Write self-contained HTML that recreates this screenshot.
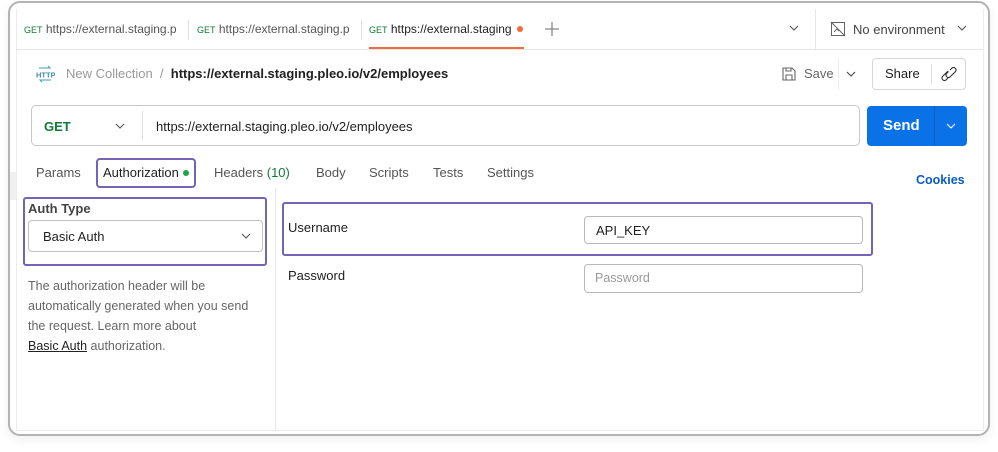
<!DOCTYPE html>
<html><head><meta charset="utf-8"><style>
*{box-sizing:border-box;margin:0;padding:0}
body{width:998px;height:452px;background:#fff;font-family:"Liberation Sans",sans-serif;position:relative;overflow:hidden;color:#212121}
.a{position:absolute;white-space:nowrap}
.t13{font-size:13px}
</style></head><body>
<div class="a" style="left:8px;top:1px;width:982px;height:435px;border:2px solid #b3b3b3;border-radius:12px;box-shadow:0 4px 10px rgba(0,0,0,0.06)"></div>
<div class="a" style="left:16px;top:9px;width:968px;height:422px;border:1px solid #ececec;border-top:none"></div>
<div class="a" style="left:10px;top:172px;width:6px;height:28px;background:#f0f0f0"></div>
<!-- tabs -->
<div class="a" style="left:16px;top:49px;width:967px;height:1px;background:#e6e6e6"></div>
<div class="a" style="left:24px;top:22px;font-size:12px;color:#555"><span style="color:#0f7b37;font-size:9px">GET</span> https://external.staging.p</div>
<div class="a" style="left:188px;top:20px;width:1px;height:20px;background:#e0e0e0"></div>
<div class="a" style="left:197px;top:22px;font-size:12px;color:#555"><span style="color:#0f7b37;font-size:9px">GET</span> https://external.staging.p</div>
<div class="a" style="left:361px;top:20px;width:1px;height:20px;background:#e0e0e0"></div>
<div class="a" style="left:369px;top:22px;font-size:12px;color:#212121"><span style="color:#0f7b37;font-size:9px">GET</span> https://external.staging</div>
<div class="a" style="left:517px;top:26px;width:6px;height:6px;border-radius:50%;background:#f26b3a"></div>
<div class="a" style="left:369px;top:47px;width:155px;height:2px;background:#f26b3a"></div>
<svg class="a" style="left:545px;top:22px" width="14" height="14"><path d="M7 0v14M0 7h14" stroke="#888" stroke-width="1.3"/></svg>
<svg class="a" style="left:789px;top:25px" width="10" height="7"><path d="M1 1l4 4 4-4" fill="none" stroke="#555" stroke-width="1.1"/></svg>
<div class="a" style="left:815px;top:9px;width:1px;height:40px;background:#e6e6e6"></div>
<svg class="a" style="left:830px;top:21px" width="16" height="16"><rect x="1.5" y="1.5" width="13" height="13" fill="none" stroke="#666"/><path d="M1 1l14 14M4 11l3-3 2 2" fill="none" stroke="#666"/></svg>
<div class="a t13" style="left:853px;top:22px;color:#444">No environment</div>
<svg class="a" style="left:957px;top:25px" width="10" height="7"><path d="M1 1l4 4 4-4" fill="none" stroke="#555" stroke-width="1.1"/></svg>
<!-- breadcrumb -->
<svg class="a" style="left:35px;top:64px" width="20" height="20"><path d="M4 4h11l-2-2M16 16H5l2 2" fill="none" stroke="#3aa2ad" stroke-width="1"/><text x="1" y="13.5" font-size="7.5" font-family="Liberation Sans" fill="#3a8fa0" font-weight="bold">HTTP</text></svg>
<div class="a t13" style="left:66px;top:66px;color:#999">New Collection&nbsp; / &nbsp;<b style="color:#212121">https://external.staging.pleo.io/v2/employees</b></div>
<svg class="a" style="left:781px;top:66px" width="16" height="16"><path d="M2 2h9l3 3v9H2z M5 14v-5h6v5 M5 2v3h5V2" fill="none" stroke="#666" stroke-width="1.1"/></svg>
<div class="a t13" style="left:804px;top:66px;color:#666">Save</div>
<div class="a" style="left:838px;top:58px;width:1px;height:32px;background:#eee"></div>
<svg class="a" style="left:846px;top:71px" width="10" height="7"><path d="M1 1l4 4 4-4" fill="none" stroke="#444" stroke-width="1.1"/></svg>
<div class="a" style="left:872px;top:58px;width:94px;height:32px;border:1px solid #d6d6d6;border-radius:4px"></div>
<div class="a t13" style="left:885px;top:66px">Share</div>
<div class="a" style="left:931px;top:64px;width:1px;height:20px;background:#ddd"></div>
<svg class="a" style="left:941px;top:66px" width="16" height="16"><path d="M9 4l2-2a2.5 2.5 0 013.5 3.5L9 11a2.5 2.5 0 01-3.5-3.5l2-2M7 12l-2 2a2.5 2.5 0 01-3.5-3.5L7 5" fill="none" stroke="#333" stroke-width="1.1"/></svg>
<!-- url bar -->
<div class="a" style="left:31px;top:105px;width:829px;height:41px;border:1px solid #c8c8c8;border-radius:5px"></div>
<div class="a t13" style="left:44px;top:119px;color:#0f7b37;font-weight:bold">GET</div>
<svg class="a" style="left:115px;top:123px" width="10" height="7"><path d="M1 1l4 4 4-4" fill="none" stroke="#555" stroke-width="1.1"/></svg>
<div class="a" style="left:142px;top:111px;width:1px;height:29px;background:#e0e0e0"></div>
<div class="a t13" style="left:156px;top:119px">https://external.staging.pleo.io/v2/employees</div>
<div class="a" style="left:867px;top:106px;width:100px;height:40px;background:#0a72e6;border-radius:4px"></div>
<div class="a" style="left:883px;top:117px;font-size:15px;font-weight:bold;color:#fff">Send</div>
<div class="a" style="left:934px;top:106px;width:1px;height:40px;background:#0a62c8"></div>
<svg class="a" style="left:946px;top:123px" width="10" height="7"><path d="M1 1l4 4 4-4" fill="none" stroke="#fff" stroke-width="1.1"/></svg>
<!-- req tabs -->
<div class="a t13" style="left:36px;top:165px;color:#555">Params</div>
<div class="a" style="left:96px;top:158px;width:100px;height:30px;border:2px solid #7563b5;border-radius:4px"></div>
<div class="a t13" style="left:103px;top:165px">Authorization</div>
<div class="a" style="left:183px;top:170px;width:6px;height:6px;border-radius:50%;background:#1fa34a"></div>
<div class="a t13" style="left:214px;top:165px;color:#555">Headers <span style="color:#0f7b37">(10)</span></div>
<div class="a t13" style="left:316px;top:165px;color:#555">Body</div>
<div class="a t13" style="left:369px;top:165px;color:#555">Scripts</div>
<div class="a t13" style="left:433px;top:165px;color:#555">Tests</div>
<div class="a t13" style="left:487px;top:165px;color:#555">Settings</div>
<div class="a" style="left:916px;top:173px;font-size:12.5px;font-weight:bold;color:#0a5cc4">Cookies</div>
<!-- left panel -->
<div class="a" style="left:275px;top:188px;width:1px;height:243px;background:#e8e8e8"></div>
<div class="a" style="left:23px;top:197px;width:244px;height:69px;border:2px solid #7563b5;border-radius:3px"></div>
<div class="a t13" style="left:28px;top:201px;color:#444;font-weight:bold">Auth Type</div>
<div class="a" style="left:28px;top:220px;width:235px;height:32px;border:1px solid #c0c0c0;border-radius:4px"></div>
<div class="a t13" style="left:43px;top:229px">Basic Auth</div>
<svg class="a" style="left:241px;top:233px" width="10" height="7"><path d="M1 1l4 4 4-4" fill="none" stroke="#555" stroke-width="1.1"/></svg>
<div class="a" style="left:28px;top:276px;font-size:12.5px;line-height:20px;color:#666">The authorization header will be<br>automatically generated when you send<br>the request. Learn more about<br><span style="color:#212121;text-decoration:underline">Basic Auth</span> authorization.</div>
<!-- right -->
<div class="a" style="left:282px;top:202px;width:591px;height:54px;border:2px solid #7563b5;border-radius:3px"></div>
<div class="a t13" style="left:288px;top:220px">Username</div>
<div class="a" style="left:584px;top:216px;width:279px;height:28px;border:1px solid #b8b8b8;border-radius:4px"></div>
<div class="a t13" style="left:596px;top:223px">API_KEY</div>
<div class="a t13" style="left:288px;top:268px">Password</div>
<div class="a" style="left:584px;top:264px;width:279px;height:29px;border:1px solid #b8b8b8;border-radius:4px"></div>
<div class="a" style="left:595px;top:271px;font-size:12.5px;color:#999">Password</div>
</body></html>
